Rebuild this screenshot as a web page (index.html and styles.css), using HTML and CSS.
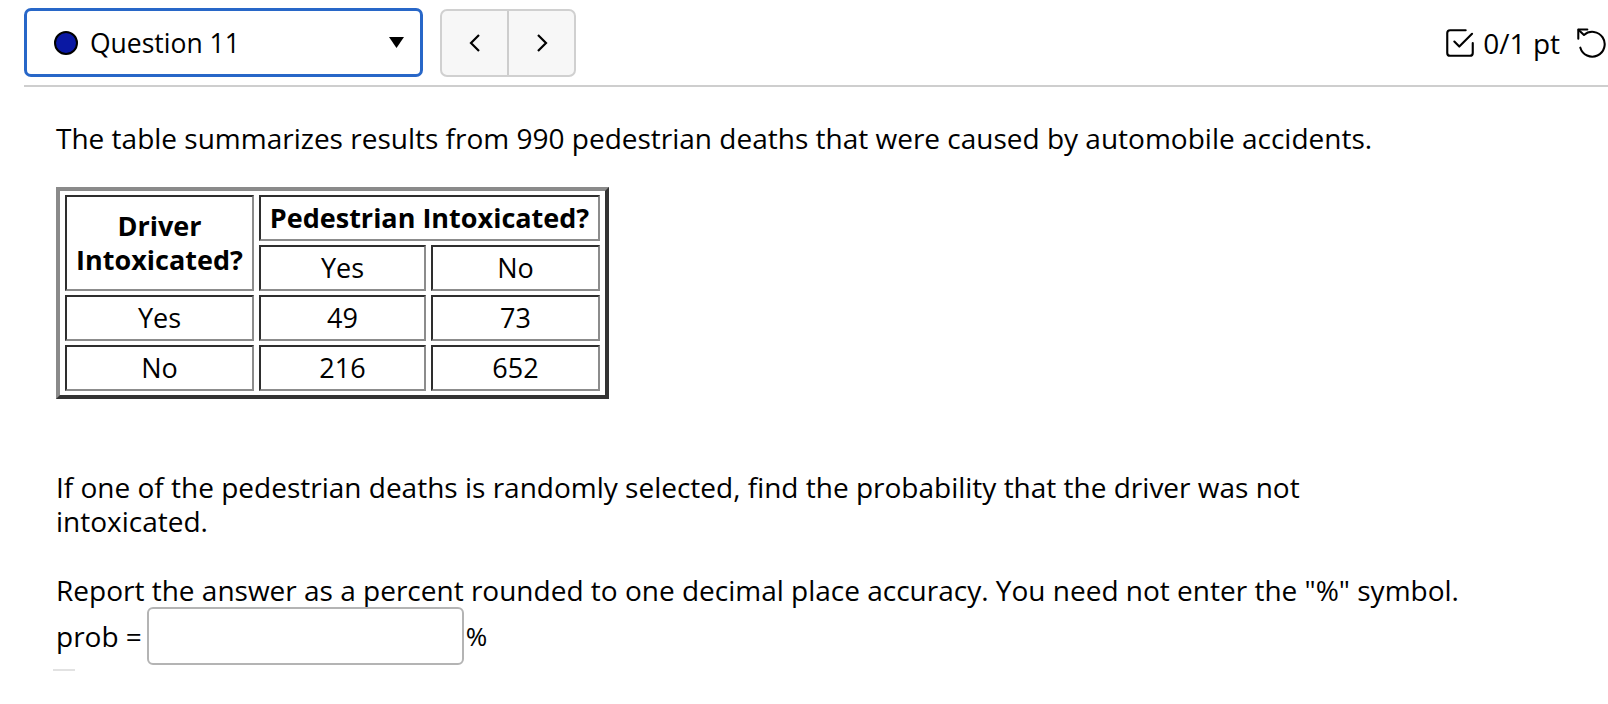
FILE: index.html
```html
<!DOCTYPE html>
<html lang="en">
<head>
<meta charset="utf-8">
<title>Question 11</title>
<link rel="stylesheet" href="styles.css">
</head>
<body>
<header class="topbar">
  <div class="qselect">
    <span class="dot"></span>
    <span class="qlabel">Question 11</span>
    <svg class="caret" width="15" height="11" viewBox="0 0 15 11"><polygon points="0,0 15,0 7.5,11" fill="#000"/></svg>
  </div>
  <div class="nav">
    <div class="navbtn prev">
      <svg width="12" height="20" viewBox="0 0 12 20"><polyline points="10,2 2,10 10,18" fill="none" stroke="#000" stroke-width="2.2"/></svg>
    </div>
    <div class="navbtn next">
      <svg width="12" height="20" viewBox="0 0 12 20"><polyline points="2,2 10,10 2,18" fill="none" stroke="#000" stroke-width="2.2"/></svg>
    </div>
  </div>
  <div class="score">
    <svg class="chk" width="34" height="34" viewBox="0 0 24 24" fill="none" stroke="#000" stroke-width="1.5" stroke-linecap="round" stroke-linejoin="round"><polyline points="8 11 11.5 14.5 20.5 5.5"/><path d="M21 12v7a2 2 0 0 1-2 2H5a2 2 0 0 1-2-2V5a2 2 0 0 1 2-2h11"/></svg>
    <span class="pts">0/1 pt</span>
    <svg class="undo" width="31" height="31" viewBox="0 0 24 24" fill="none" stroke="#000" stroke-width="1.6" stroke-linecap="round" stroke-linejoin="round"><path d="M1 9V2h7"/><path d="M1.3 2.3 L5.4 6.2 A9.6 9.6 0 1 1 2.6 16"/></svg>
  </div>
</header>

<main class="question">
  <p class="intro">The table summarizes results from 990 pedestrian deaths that were caused by automobile accidents.</p>

  <table class="data">
    <colgroup>
      <col class="c1"><col class="c2"><col class="c3">
    </colgroup>
    <tr>
      <td rowspan="2" class="th">Driver<br>Intoxicated?</td>
      <td colspan="2" class="th">Pedestrian Intoxicated?</td>
    </tr>
    <tr>
      <td>Yes</td>
      <td>No</td>
    </tr>
    <tr>
      <td>Yes</td>
      <td>49</td>
      <td>73</td>
    </tr>
    <tr>
      <td>No</td>
      <td>216</td>
      <td>652</td>
    </tr>
  </table>

  <p class="ask">If one of the pedestrian deaths is randomly selected, find the probability that the driver was not intoxicated.</p>

  <p class="report">Report the answer as a percent rounded to one decimal place accuracy. You need not enter the "%" symbol.</p>
  <div class="answer">
    <span class="lbl">prob =</span>
    <span class="field"></span>
    <span class="pct">%</span>
  </div>
  <div class="stub"></div>
</main>
</body>
</html>
```
FILE: styles.css
```css
html, body {
  margin: 0;
  padding: 0;
  background: #fff;
}
body {
  font-family: "Open Sans", "Noto Sans", sans-serif;
  color: #000;
}

.topbar {
  display: flex;
  align-items: center;
  margin-left: 24px;
  padding: 8px 0 8px 0;
  border-bottom: 2px solid #cecece;
}

.qselect {
  box-sizing: border-box;
  width: 399px;
  height: 69px;
  border: 3px solid #2867c8;
  border-radius: 7px;
  display: flex;
  align-items: center;
  padding: 0 16px 0 27px;
}
.dot {
  box-sizing: border-box;
  width: 24px;
  height: 24px;
  border-radius: 50%;
  background: #0a18a3;
  border: 2px solid #000;
  margin-right: 12px;
  flex: none;
}
.qlabel {
  flex: 1;
  font-size: 26.5px;
  font-weight: 500;
  line-height: 34px;
}
.caret { flex: none; }

.nav {
  box-sizing: border-box;
  margin-left: 17px;
  height: 68px;
  width: 136px;
  display: flex;
  border: 2px solid #d0d0d0;
  border-radius: 7px;
  background: #f7f7f7;
}
.navbtn {
  flex: 1;
  display: flex;
  align-items: center;
  justify-content: center;
}
.navbtn.prev { border-right: 2px solid #cdcdcd; }

.score {
  margin-left: auto;
  display: flex;
  align-items: center;
}
.chk { margin-right: 6px; }
.pts {
  font-size: 28px;
  font-weight: 500;
  line-height: 34px;
  margin-right: 17px;
}
.undo { margin-right: 0; }

.question {
  padding-left: 56px;
  width: 1410px;
  font-size: 28px;
  font-weight: 500;
  line-height: 34px;
}
.question p { margin: 0; }
.intro { margin-top: 34px !important; }

.data {
  margin-top: 32px;
  table-layout: fixed;
  width: 553px;
  border-collapse: separate;
  border-spacing: 5px 4px;
  border-style: solid;
  border-width: 4px;
  border-color: #8a8a8a #333 #333 #8a8a8a;
  font-size: 27px;
}
.data col.c1 { width: 189px; }
.data col.c2 { width: 167px; }
.data col.c3 { width: 169px; }
.data td {
  box-sizing: border-box;
  height: 46px;
  padding: 4px 2px;
  text-align: center;
  vertical-align: middle;
  border-style: solid;
  border-width: 2px;
  border-color: #2e2e2e #8c8c8c #8c8c8c #2e2e2e;
}
.data td.th { font-weight: bold; }

.ask {
  margin-top: 71px !important;
  max-width: 1300px;
}
.report { margin-top: 35px !important; }

.answer {
  display: flex;
  align-items: center;
}
.lbl { margin-right: 5px; }
.field {
  box-sizing: border-box;
  width: 317px;
  height: 58px;
  border: 2px solid #b4b4b4;
  border-radius: 6px;
  background: #fff;
}
.pct { margin-left: 2px; font-size: 26px; }

.stub {
  margin-top: 4px;
  margin-left: -3px;
  width: 22px;
  height: 2px;
  background: #e2e2e2;
}
```
